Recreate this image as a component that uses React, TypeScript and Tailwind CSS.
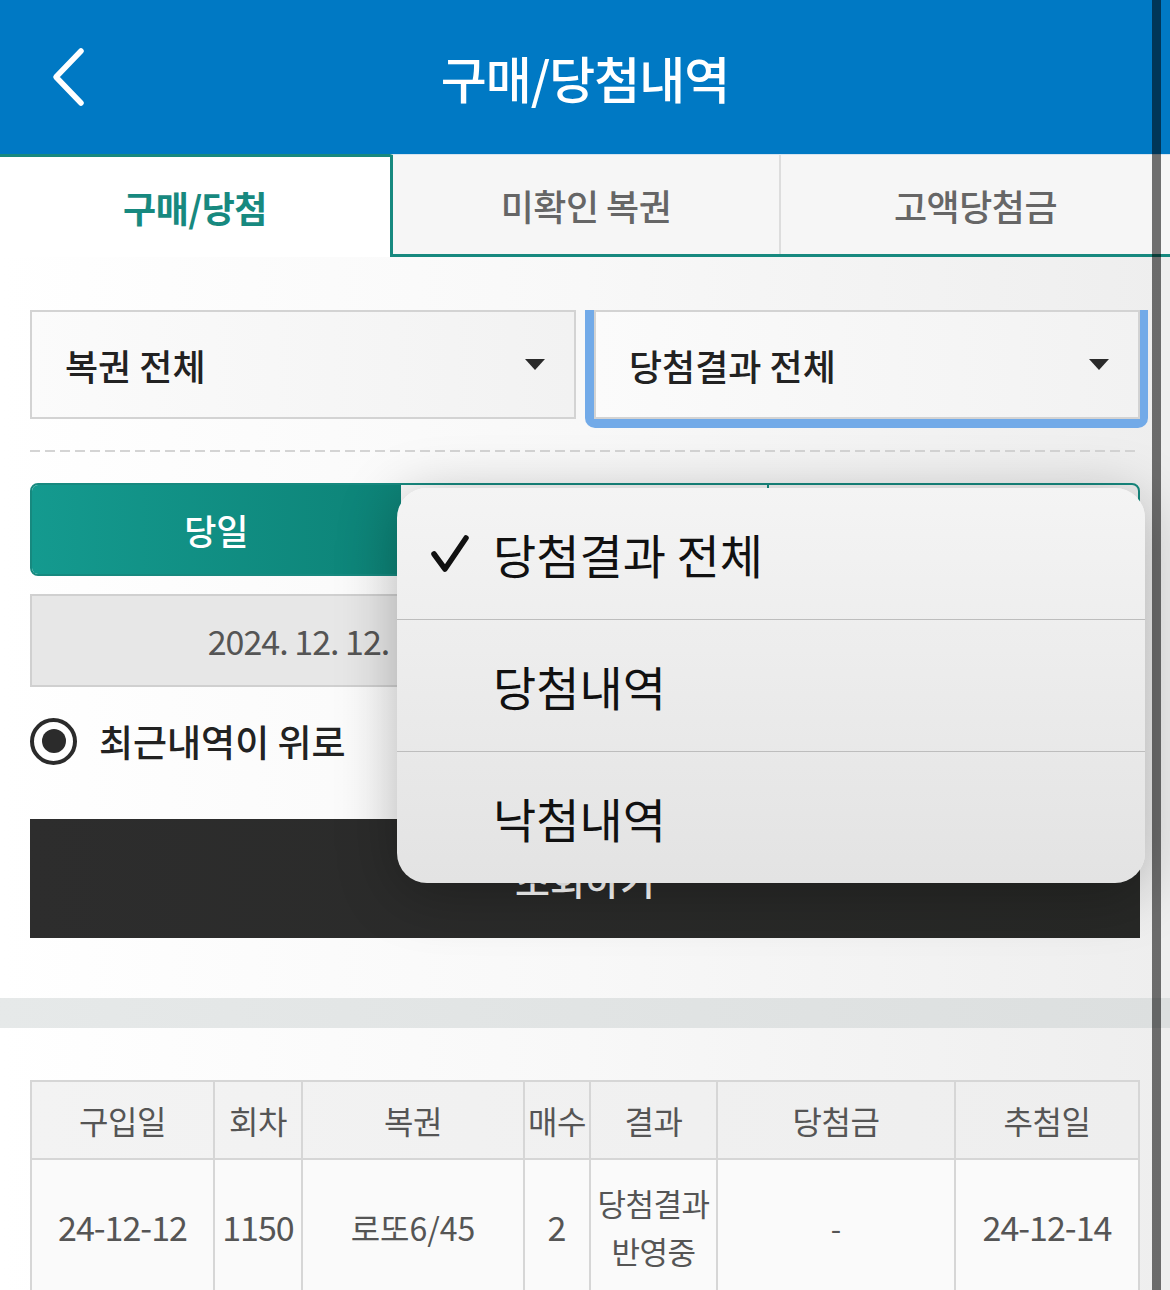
import React from "react"

const columns = [
  { label: "구입일", w: "w-[183px]" },
  { label: "회차", w: "w-[88px]" },
  { label: "복권", w: "w-[222px]" },
  { label: "매수", w: "w-[66px]" },
  { label: "결과", w: "w-[127px]" },
  { label: "당첨금", w: "w-[238px]" },
  { label: "추첨일", w: "w-[182px]" },
]

function Caret() {
  return (
    <svg width="20" height="11" viewBox="0 0 20 11" className="shrink-0">
      <path d="M0 0 H20 L10 11 Z" fill="#2a2a2a" />
    </svg>
  )
}

function SelectBox({ label }: { label: string }) {
  return (
    <div className="h-[109px] border-2 border-[#d3d3d3] bg-gradient-to-r from-[#fbfbfb] to-[#f2f2f2] flex items-center justify-between pl-[33px] pr-[29px]">
      <span className="text-[36px] font-medium text-[#222]">{label}</span>
      <Caret />
    </div>
  )
}

export default function App() {
  return (
    <div className="relative w-[1170px] h-[1290px] overflow-hidden bg-gradient-to-r from-white via-[#f8f8f8] to-[#eeeeee] font-['Noto_Sans_CJK_KR','Noto_Sans',sans-serif] leading-none">
      {/* Header */}
      <header className="relative h-[154px] bg-[#0079c4] flex items-center justify-center">
        <svg width="40" height="60" viewBox="0 0 40 60" className="absolute left-[48px] top-[47px]">
          <path d="M33 4 L8 30 L33 56" fill="none" stroke="white" strokeWidth="5.5" strokeLinecap="round" strokeLinejoin="round" />
        </svg>
        <h1 className="text-[50px] font-medium text-white tracking-[-1px]">구매/당첨내역</h1>
      </header>

      {/* Tabs */}
      <nav className="flex h-[103px]">
        <div className="w-[390px] border-t-[3px] border-[#17897f] bg-white flex items-center justify-center">
          <span className="text-[36px] font-bold text-[#17897f] tracking-[-0.5px]">구매/당첨</span>
        </div>
        <div className="flex-1 flex border-l-[3px] border-b-[3px] border-[#17897f] border-t border-t-[#d5e3ef] bg-[#f6f6f6]">
          <div className="w-[388px] border-r-2 border-[#dddddd] flex items-center justify-center">
            <span className="text-[36px] font-medium text-[#666] tracking-[-0.5px]">미확인 복권</span>
          </div>
          <div className="flex-1 flex items-center justify-center">
            <span className="text-[36px] font-medium text-[#666] tracking-[-0.5px]">고액당첨금</span>
          </div>
        </div>
      </nav>

      {/* Search form */}
      <section className="px-[30px]">
        <div className="mt-[53px] grid grid-cols-2 gap-[18px]">
          <SelectBox label="복권 전체" />
          <div className="-ml-[9px] -mr-[8px] -mb-[9px] pl-[9px] pr-[8px] pb-[9px] bg-[#72aae8] rounded-b-[10px]">
            <SelectBox label="당첨결과 전체" />
          </div>
        </div>

        <div className="mt-[31px] h-[2px] bg-[repeating-linear-gradient(90deg,#d4d4d4_0_10px,transparent_10px_15px)]" />

        <div className="mt-[31px] h-[93px] grid grid-cols-3 rounded-[8px] border-2 border-[#17897f] overflow-hidden">
          <div className="bg-gradient-to-r from-[#149a8f] to-[#0d8377] flex items-center justify-center">
            <span className="text-[35px] font-medium text-white">당일</span>
          </div>
          <div className="border-r-2 border-[#17897f]" />
          <div />
        </div>

        <div className="mt-[18px] h-[93px] grid grid-cols-[1fr_36px_1fr]">
          <div className="border-2 border-[#d0d0d0] bg-[#e7e7e7] flex items-center justify-center">
            <span className="text-[34px] text-[#555] tracking-[-1px]">2024. 12. 12.</span>
          </div>
          <div />
          <div className="border-2 border-[#d0d0d0] bg-[#e7e7e7]" />
        </div>

        <div className="mt-[30px] h-[48px] flex items-center gap-[22px]">
          <span className="w-[47px] h-[47px] rounded-full border-[4px] border-[#2b2b2b] flex items-center justify-center">
            <span className="w-[24px] h-[24px] rounded-full bg-[#2b2b2b]" />
          </span>
          <span className="text-[37px] font-medium text-[#222]">최근내역이 위로</span>
        </div>

        <button className="mt-[54px] w-full h-[119px] bg-gradient-to-r from-[#2d2d2d] to-[#272826] flex items-center justify-center">
          <span className="text-[38px] font-medium text-white">조회하기</span>
        </button>
      </section>

      <div className="mt-[60px] h-[30px] bg-gradient-to-r from-[#e6e9e9] to-[#dcdfdf]" />

      {/* Result table */}
      <div className="mt-[52px] mx-[30px] border-2 border-[#d6d6d6]">
        <div className="flex h-[78px] bg-gradient-to-r from-[#f3f3f3] to-[#eeeeee] border-b-2 border-[#d6d6d6]">
          {columns.map((c, i) => (
            <div
              key={c.label}
              className={`${c.w} ${i < columns.length - 1 ? "border-r-2 border-[#d6d6d6]" : ""} flex items-center justify-center text-[32px] text-[#555] tracking-[-0.5px]`}
            >
              {c.label}
            </div>
          ))}
        </div>
        <div className="flex h-[134px] bg-[#fafafa]">
          <div className="w-[183px] border-r-2 border-[#d6d6d6] flex items-center justify-center text-[34px] text-[#555] tracking-[-1px]">24-12-12</div>
          <div className="w-[88px] border-r-2 border-[#d6d6d6] flex items-center justify-center text-[34px] text-[#555] tracking-[-1px]">1150</div>
          <div className="w-[222px] border-r-2 border-[#d6d6d6] flex items-center justify-center text-[32px] text-[#555]">로또6/45</div>
          <div className="w-[66px] border-r-2 border-[#d6d6d6] flex items-center justify-center text-[34px] text-[#555]">2</div>
          <div className="w-[127px] border-r-2 border-[#d6d6d6] flex flex-col items-center justify-center text-[31px] leading-[48px] text-[#555] tracking-[-0.5px]">
            <span>당첨결과</span>
            <span>반영중</span>
          </div>
          <div className="w-[238px] border-r-2 border-[#d6d6d6] flex items-center justify-center text-[30px] text-[#555]">-</div>
          <div className="w-[182px] flex items-center justify-center text-[34px] text-[#555] tracking-[-1px]">24-12-14</div>
        </div>
      </div>

      {/* Open select menu */}
      <div className="absolute left-[397px] top-[488px] w-[748px] h-[395px] rounded-[30px] bg-gradient-to-b from-[#f4f4f4] to-[#e3e3e3] shadow-[0_10px_60px_rgba(0,0,0,0.28)] overflow-hidden flex flex-col">
        <div className="h-[132px] flex items-center border-b border-[#bdbdbd]">
          <svg width="40" height="40" viewBox="0 0 40 40" className="ml-[33px] mr-[23px]">
            <path d="M4 20 L15 35 L36 4" fill="none" stroke="#111" strokeWidth="5.5" strokeLinecap="round" strokeLinejoin="round" />
          </svg>
          <span className="text-[47px] text-[#111]">당첨결과 전체</span>
        </div>
        <div className="h-[132px] flex items-center border-b border-[#bdbdbd] pl-[96px]">
          <span className="text-[47px] text-[#111]">당첨내역</span>
        </div>
        <div className="flex-1 flex items-center pl-[96px]">
          <span className="text-[47px] text-[#111]">낙첨내역</span>
        </div>
      </div>

      {/* Scrollbar */}
      <div className="absolute top-0 right-[9px] w-[9px] h-full bg-black/55" />
    </div>
  )
}
